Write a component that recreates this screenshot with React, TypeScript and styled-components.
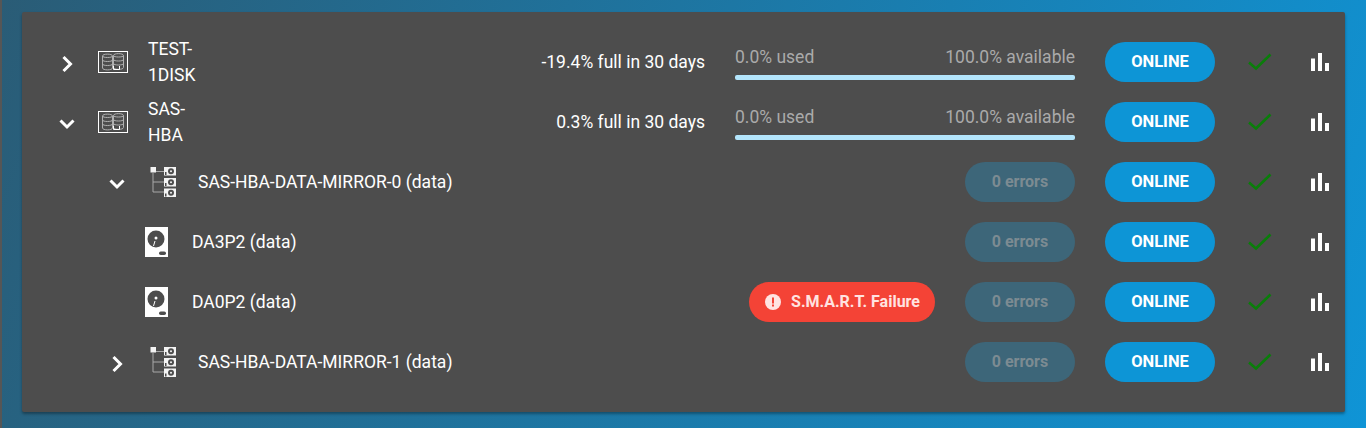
import React from "react";
import styled, { createGlobalStyle } from "styled-components";

const GlobalStyle = createGlobalStyle`
  html, body {
    margin: 0;
    padding: 0;
    height: 100%;
    overflow: hidden;
    font-family: Roboto, "Liberation Sans", sans-serif;
  }
`;

const Page = styled.div`
  box-sizing: border-box;
  width: 1366px;
  height: 428px;
  padding: 12px 21px 16px 20px;
  border-left: 2px solid #565656;
  background: linear-gradient(110deg, #2a5c76 0%, #0f94d6 100%);
`;

const Panel = styled.div`
  box-sizing: border-box;
  height: 400px;
  padding-top: 20px;
  background: #4d4d4d;
  border-radius: 2px;
  box-shadow: 0 2px 3px rgba(0, 0, 0, 0.35);
`;

const Row = styled.div`
  display: flex;
  align-items: center;
  height: 60px;
  color: #fff;
  font-size: 17.5px;
`;

const Toggle = styled.div<{ $level: number }>`
  flex: none;
  display: flex;
  justify-content: center;
  width: 30px;
  padding-top: 4px;
  margin-left: ${(p) => (p.$level === 0 ? 30 : 80)}px;
`;

const IconCell = styled.div<{ $width: number; $left: number; $right: number }>`
  flex: none;
  display: flex;
  width: ${(p) => p.$width}px;
  margin-left: ${(p) => p.$left}px;
  margin-right: ${(p) => p.$right}px;
`;

const Name = styled.div<{ $narrow?: boolean }>`
  flex: ${(p) => (p.$narrow ? "none" : "1")};
  width: ${(p) => (p.$narrow ? "60px" : "auto")};
  line-height: 26px;
`;

const Forecast = styled.div`
  flex: 1;
  text-align: right;
  margin-right: 30px;
`;

const Usage = styled.div`
  flex: none;
  width: 340px;
  margin-right: 30px;
  padding-top: 3px;
`;

const UsageLabels = styled.div`
  display: flex;
  justify-content: space-between;
  color: #aaa;
  line-height: 19px;
  margin-bottom: 8px;
`;

const UsageBar = styled.div`
  height: 5px;
  border-radius: 2px;
  background: #b3e5fc;
`;

const Pill = styled.div<{ $bg: string; $fg: string; $width: number; $size?: number }>`
  flex: none;
  display: flex;
  align-items: center;
  justify-content: center;
  gap: 9px;
  box-sizing: border-box;
  width: ${(p) => p.$width}px;
  height: 40px;
  margin-right: 30px;
  padding-bottom: 1px;
  border-radius: 20px;
  background: ${(p) => p.$bg};
  color: ${(p) => p.$fg};
  font-size: ${(p) => p.$size ?? 16}px;
  font-weight: 700;
`;

const Actions = styled.div`
  flex: none;
  display: flex;
  align-items: center;
  width: 100px;
`;

const CheckCell = styled.div`
  display: flex;
  box-sizing: border-box;
  width: 66px;
  padding-left: 3px;
`;

const Chevron = ({ open }: { open: boolean }) => (
  <svg width="18" height="18" viewBox="0 0 18 18" fill="none" stroke="#fff" strokeWidth="3">
    <path d={open ? "M2.5 5.500 9 12l6.500-6.500" : "M5.500 2 12.500 9l-7 7"} />
  </svg>
);

const PoolIcon = () => (
  <svg width="30" height="22" viewBox="0 0 30 22" fill="none">
    <rect x="0.5" y="0.5" width="29" height="21" stroke="#fff" />
    <g stroke="#b0b0b0" strokeWidth="1">
      <path d="M4.500 5c0-2.500 10-2.500 10 0v12c0 2.500-10 2.500-10 0z" />
      <path d="M4.500 5c0 2 10 2 10 0M4.500 9c0 2 10 2 10 0M4.500 13c0 2 10 2 10 0" />
      <path d="M15.500 4.500c0-2.500 10-2.500 10 0v12c0 2.500-10 2.500-10 0z" />
      <path d="M15.500 4.500c0 2 10 2 10 0M15.500 8.500c0 2 10 2 10 0M15.500 12.500c0 2 10 2 10 0" />
    </g>
    <path d="M15.500 15v3.500h6V15" stroke="#fff" />
  </svg>
);

const MiniDisk = ({ y }: { y: number }) => (
  <g transform={`translate(14 ${y})`}>
    <rect width="12" height="8.500" fill="#f4f4f4" />
    <circle cx="7" cy="4.250" r="3" fill="#4d4d4d" />
    <circle cx="7" cy="4.250" r="1" fill="#f4f4f4" />
    <rect x="1" y="5" width="1.500" height="3" fill="#4d4d4d" />
  </g>
);

const VdevIcon = () => (
  <svg width="28" height="30" viewBox="0 0 28 30" fill="none">
    <path d="M3 6v19h11M3 15h11M6 4.500h8" stroke="#a8a8a8" />
    <rect x="0.500" width="5.500" height="5.500" fill="#f4f4f4" />
    <MiniDisk y={0} />
    <MiniDisk y={11} />
    <MiniDisk y={21.500} />
  </svg>
);

const DiskIcon = () => (
  <svg width="23" height="30" viewBox="0 0 23 30">
    <rect width="23" height="30" fill="#fff" />
    <circle cx="11" cy="12" r="8.500" fill="#4d4d4d" />
    <circle cx="11" cy="11" r="1.500" fill="#fff" />
    <path d="M10 14 8.500 19" stroke="#fff" />
    <rect x="14" y="24.500" width="7" height="3.500" rx="1.750" fill="#4d4d4d" />
  </svg>
);

const WarningIcon = () => (
  <svg width="18" height="18" viewBox="0 0 18 18">
    <circle cx="9" cy="9" r="8" fill="#ffe3e1" />
    <rect x="8" y="4.500" width="2" height="6" fill="#f44336" />
    <rect x="8" y="11.500" width="2" height="2" fill="#f44336" />
  </svg>
);

const CheckIcon = () => (
  <svg width="24" height="18" viewBox="0 0 24 18" fill="none">
    <path d="M1 9.500 8 15.500 22.500 1.500" stroke="#0a7d0a" strokeWidth="2.500" />
  </svg>
);

const StatsIcon = () => (
  <svg width="18" height="18" viewBox="0 0 18 18" fill="#fff">
    <rect x="0" y="5.500" width="4" height="12.500" />
    <rect x="7" y="0" width="4" height="18" />
    <rect x="14" y="10" width="4" height="8" />
  </svg>
);

const StatusActions = () => (
  <>
    <Pill $bg="#0d95d6" $fg="#fff" $width={110} $size={16.5}>ONLINE</Pill>
    <Actions>
      <CheckCell><CheckIcon /></CheckCell>
      <StatsIcon />
    </Actions>
  </>
);

const Errors = () => <Pill $bg="#3d6679" $fg="#7c8b92" $width={110}>0 errors</Pill>;

const pools = [
  { name: "TEST-1DISK", open: false, forecast: "-19.4% full in 30 days" },
  { name: "SAS-HBA", open: true, forecast: "0.3% full in 30 days" },
];

const App = () => (
  <Page>
    <GlobalStyle />
    <Panel>
      {pools.map((pool) => (
        <Row key={pool.name}>
          <Toggle $level={0}><Chevron open={pool.open} /></Toggle>
          <IconCell $width={30} $left={16} $right={20}><PoolIcon /></IconCell>
          <Name $narrow>{pool.name.replace("-", "- ")}</Name>
          <Forecast>{pool.forecast}</Forecast>
          <Usage>
            <UsageLabels>
              <span>0.0% used</span>
              <span>100.0% available</span>
            </UsageLabels>
            <UsageBar />
          </Usage>
          <StatusActions />
        </Row>
      ))}
      <Row>
        <Toggle $level={1}><Chevron open /></Toggle>
        <IconCell $width={28} $left={18} $right={20}><VdevIcon /></IconCell>
        <Name>SAS-HBA-DATA-MIRROR-0 (data)</Name>
        <Errors />
        <StatusActions />
      </Row>
      <Row>
        <IconCell $width={23} $left={123} $right={24}><DiskIcon /></IconCell>
        <Name>DA3P2 (data)</Name>
        <Errors />
        <StatusActions />
      </Row>
      <Row>
        <IconCell $width={23} $left={123} $right={24}><DiskIcon /></IconCell>
        <Name>DA0P2 (data)</Name>
        <Pill $bg="#f44336" $fg="#ffe3e1" $width={186}>
          <WarningIcon />
          S.M.A.R.T. Failure
        </Pill>
        <Errors />
        <StatusActions />
      </Row>
      <Row>
        <Toggle $level={1}><Chevron open={false} /></Toggle>
        <IconCell $width={28} $left={18} $right={20}><VdevIcon /></IconCell>
        <Name>SAS-HBA-DATA-MIRROR-1 (data)</Name>
        <Errors />
        <StatusActions />
      </Row>
    </Panel>
  </Page>
);

export default App;
